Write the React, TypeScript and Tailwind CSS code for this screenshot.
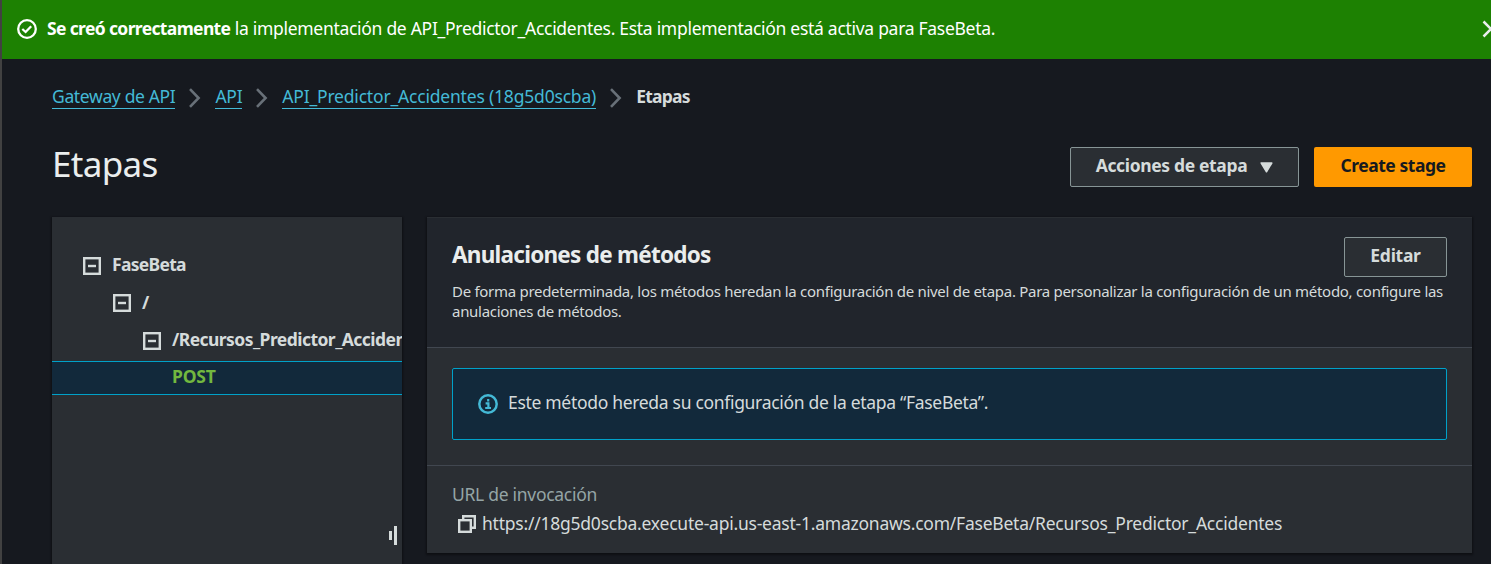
import type { ReactNode } from "react";

function ChevronSeparator() {
  return (
    <svg className="mx-[10px] h-5 w-5 shrink-0" viewBox="0 0 20 20" fill="none">
      <path d="M5 1.2 13.6 10 5 18.8" stroke="#687078" strokeWidth="2.6" />
    </svg>
  );
}

function CheckCircle() {
  return (
    <svg className="-mt-px h-5 w-5 shrink-0" viewBox="0 0 20 20" fill="none" stroke="#ffffff" strokeWidth="2.3">
      <circle cx="10" cy="10" r="8.8" />
      <path d="M5.3 10 8.6 13 14.2 7.2" />
    </svg>
  );
}

function InfoCircle() {
  return (
    <svg className="h-5 w-5 shrink-0" viewBox="0 0 20 20" fill="none" stroke="#44b9d6" strokeWidth="2.5">
      <circle cx="10" cy="10" r="8.7" />
      <path d="M10.2 5v2.4M7.6 9.4h2.8v5M7.2 14h5.8" strokeWidth="2.2" />
    </svg>
  );
}

function Collapse() {
  return (
    <svg className="h-[18px] w-[18px] shrink-0" viewBox="0 0 18 18" fill="none" stroke="#d5dbdb" strokeWidth="2.4">
      <rect x="1.2" y="1.2" width="15.6" height="15.6" />
      <path d="M5 9h8" />
    </svg>
  );
}

function CopyIcon() {
  return (
    <svg className="h-[18px] w-[18px] shrink-0" viewBox="0 0 18 18" fill="none" stroke="#d5dbdb" strokeWidth="2.4">
      <rect x="1.2" y="5.2" width="11.6" height="11.6" />
      <path d="M5.2 5V1.2h11.6v11.6H13" />
    </svg>
  );
}

function Crumb({ children }: { children: ReactNode }) {
  return (
    <a className="h-[23px] border-b border-[#44b9d6] leading-[21px] text-[#44b9d6]" href="#">
      {children}
    </a>
  );
}

function Banner() {
  return (
    <div className="flex h-[59px] shrink-0 items-center overflow-hidden bg-[#1d8102] pl-[15px] text-white">
      <CheckCircle />
      <p className="-mt-0.5 ml-[10px] whitespace-nowrap">
        <b className="font-bold tracking-[-0.64px]">Se creó correctamente</b>
        {" la implementación de API_Predictor_Accidentes. Esta implementación está activa para FaseBeta."}
      </p>
      <svg className="-mt-px -mr-[10px] ml-auto h-5 w-5 shrink-0" viewBox="0 0 20 20" fill="none" stroke="#eaeded" strokeWidth="2.5">
        <path d="M2.5 2.5l15 15M17.5 2.5l-15 15" />
      </svg>
    </div>
  );
}

function StageTree() {
  return (
    <aside className="flex w-[350px] shrink-0 flex-col overflow-hidden bg-[#2a2e33] pt-[30px] font-bold tracking-[-0.7px] whitespace-nowrap text-[#d5dbdb] shadow-[0_1px_2px_1px_rgba(0,0,0,0.4)]">
      <div className="flex h-[37px] items-center gap-[11px] pl-[31px]">
        <Collapse />
        <span className="-mt-0.5">FaseBeta</span>
      </div>
      <div className="flex h-[38px] items-center gap-[11px] pl-[61px]">
        <Collapse />
        <span>/</span>
      </div>
      <div className="flex h-[38px] items-center gap-[11px] pl-[91px]">
        <Collapse />
        <span className="-mt-0.5 tracking-[-0.55px]">/Recursos_Predictor_Accidentes</span>
      </div>
      <div className="mt-px flex h-[34px] items-center border-y border-[#00a1c9] bg-[#12293b] pl-[120px] tracking-[-0.2px] text-[#72b83f]">
        <span className="-mt-0.5">POST</span>
      </div>
      <div className="mt-auto mb-[19px] flex items-center justify-end gap-[2px] pr-[5px]">
        <span className="h-[9px] w-[3px] bg-[#d5dbdb]" />
        <span className="h-[19px] w-[3px] bg-[#d5dbdb]" />
      </div>
    </aside>
  );
}

function MethodOverrides() {
  return (
    <section className="flex h-[336px] w-[1045px] shrink-0 flex-col bg-[#2a2e33] shadow-[0_1px_2px_1px_rgba(0,0,0,0.4)]">
      <header className="h-[131px] border-t border-b border-t-[#2a2e33] border-b-[#414750] bg-[#21252c] px-[25px] pt-[19px]">
        <div className="flex h-10 items-start justify-between">
          <h2 className="text-[22.5px] leading-[36px] font-bold tracking-[-0.74px] text-[#eaeded]">Anulaciones de métodos</h2>
          <button className="h-10 w-[103px] rounded-[2px] border border-[#879596] bg-[#2a2e33] pb-0.5 font-bold text-[#d5dbdb]">
            Editar
          </button>
        </div>
        <p className="mt-1 text-[15px] leading-5 whitespace-nowrap text-[#d5dbdb]">
          De forma predeterminada, los métodos heredan la configuración de nivel de etapa. Para personalizar la configuración de un método, configure las
          <br />
          anulaciones de métodos.
        </p>
      </header>
      <div className="mx-[25px] mt-5 flex h-[72px] shrink-0 items-center gap-[10px] rounded-[2px] border border-[#00a1c9] bg-[#12293b] pl-[25px] text-[#d5dbdb]">
        <InfoCircle />
        <span className="-mt-0.5 tracking-[-0.31px]">Este método hereda su configuración de la etapa “FaseBeta”.</span>
      </div>
      <div className="mt-[25px] flex flex-1 flex-col border-t border-[#414750] px-[25px] pt-[14px]">
        <div className="leading-[28px] text-[#95a5a6]">URL de invocación</div>
        <div className="flex h-[31px] items-center gap-[6px] pl-[6px] text-[#d5dbdb]">
          <CopyIcon />
          <span className="whitespace-nowrap tracking-[-0.23px]">
            https://18g5d0scba.execute-api.us-east-1.amazonaws.com/FaseBeta/Recursos_Predictor_Accidentes
          </span>
        </div>
      </div>
    </section>
  );
}

export default function App() {
  return (
    <div className="flex h-[564px] w-[1491px] flex-col overflow-hidden border-l-2 border-[#414141] bg-[#16191f] font-['Noto_Sans',sans-serif] text-[17.5px] leading-[27.5px] tracking-[-0.29px]">
      <Banner />
      <nav className="mt-[25px] ml-[50px] flex h-[27px] shrink-0 items-center whitespace-nowrap">
        <span className="flex tracking-[-0.35px]">
          <Crumb>Gateway de API</Crumb>
        </span>
        <ChevronSeparator />
        <Crumb>API</Crumb>
        <ChevronSeparator />
        <span className="flex tracking-[-0.19px]">
          <Crumb>API_Predictor_Accidentes (18g5d0scba)</Crumb>
        </span>
        <ChevronSeparator />
        <span className="-mt-0.5 font-bold tracking-[-0.75px] text-[#d5dbdb]">Etapas</span>
      </nav>
      <div className="mt-[36px] mr-[19px] ml-[50px] flex h-10 shrink-0 items-center gap-[15px]">
        <h1 className="mr-auto -mt-[7px] text-[35px] leading-[45px] tracking-[-0.7px] text-[#eaeded]">Etapas</h1>
        <button className="flex h-10 w-[229px] items-center justify-center gap-[13px] rounded-[2px] border border-[#879596] bg-[#2a2e33] font-bold text-[#d5dbdb]">
          <span className="-mt-0.5 tracking-[-0.35px]">Acciones de etapa</span>
          <svg className="h-[11px] w-[13px]" viewBox="0 0 13 11">
            <path d="M1.2 1h10.6L6.5 9.8z" fill="#d5dbdb" stroke="#d5dbdb" strokeWidth="1.5" strokeLinejoin="round" />
          </svg>
        </button>
        <button className="h-10 w-[158px] rounded-[2px] bg-[#ff9900] pb-0.5 font-bold tracking-[-0.45px] text-[#16191f]">Create stage</button>
      </div>
      <main className="mt-[30px] ml-[50px] flex flex-1 gap-[25px]">
        <StageTree />
        <MethodOverrides />
      </main>
    </div>
  );
}
